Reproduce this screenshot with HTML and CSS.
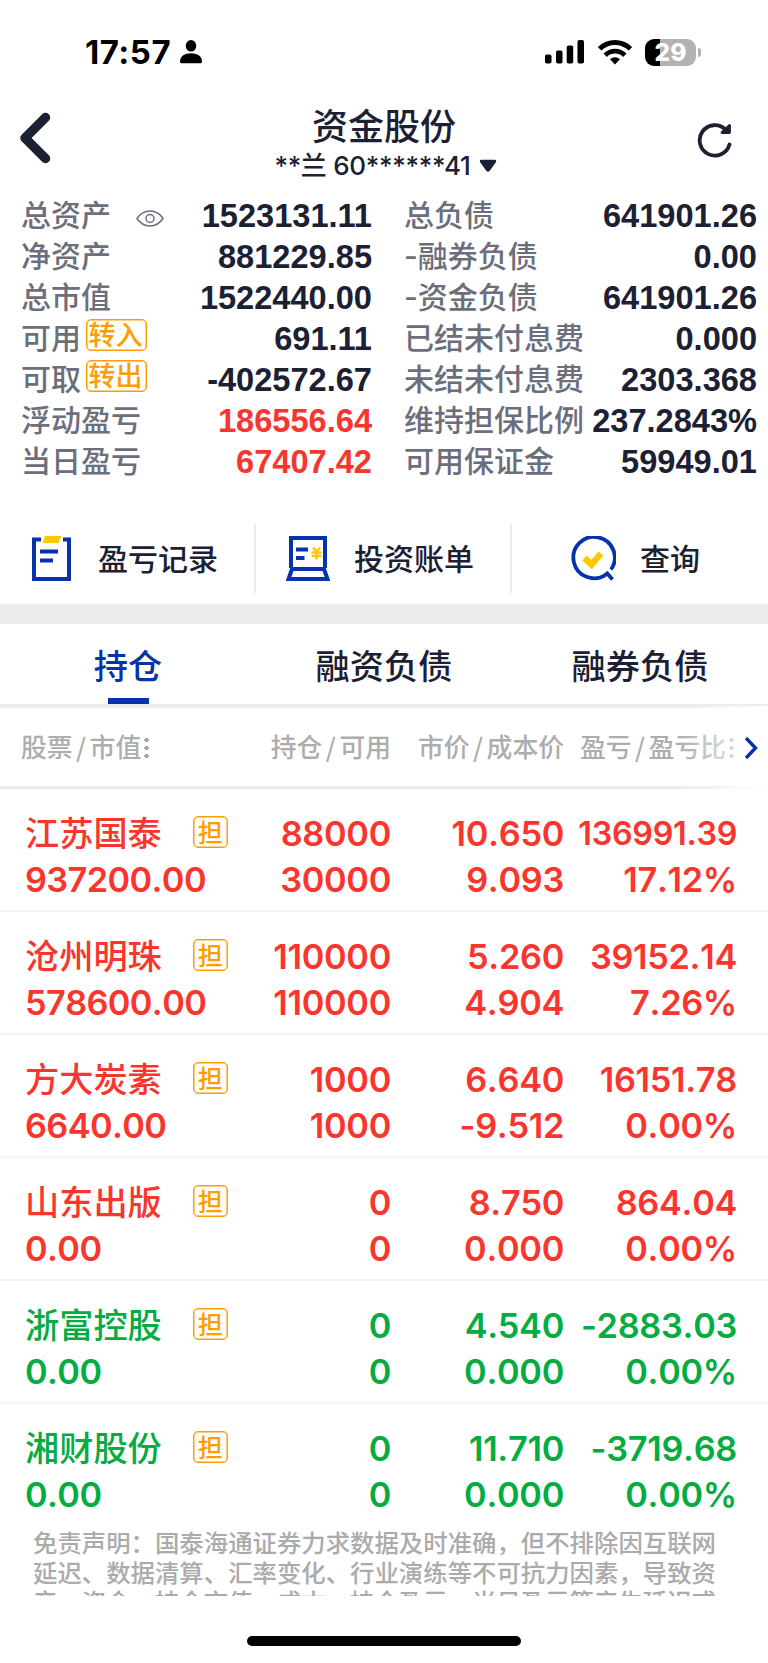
FILE: index.html
```
<!DOCTYPE html>
<html lang="zh-CN">
<head>
<meta charset="utf-8">
<title>资金股份</title>
<link rel="stylesheet" href="styles.css">
</head>
<body>
<div class="status">
  <div class="clock">17:57</div>
  <svg class="person" width="22" height="24" viewBox="0 0 22 24"><ellipse cx="11" cy="5.800" rx="5.300" ry="5.800"/><path d="M0 21.500C0 16 5 13.200 11 13.200s11 2.800 11 8.300c0 1.200-.6 1.800-1.800 1.800H1.800C.6 23.300 0 22.700 0 21.500z"/></svg>
  <svg class="signal" width="40" height="24" viewBox="0 0 40 24"><rect x="0" y="14.500" width="6.500" height="9" rx="1.800"/><rect x="11" y="10.500" width="6.500" height="13" rx="1.800"/><rect x="21.700" y="5.500" width="6.500" height="18" rx="1.800"/><rect x="32.500" y="0" width="6.500" height="23.500" rx="1.800"/></svg>
  <svg class="wifi" width="34" height="25" viewBox="0 0 34 25"><g fill="none" stroke="#000" stroke-width="4.800"><path d="M1.600 8.800a22 22 0 0 1 30.800 0"/><path d="M7.200 15.200a14 14 0 0 1 19.600 0"/></g><path d="M17 24.500l-5-5.200a7.200 7.200 0 0 1 10 0z"/></svg>
  <div class="battery"><span>29</span></div><i class="nub"></i>
</div>
<header class="nav">
  <svg class="back" width="32" height="52" viewBox="0 0 32 52"><path d="M26.500 5.500L6 26l20.500 20.500" fill="none" stroke="#1c2033" stroke-width="9.500" stroke-linecap="round" stroke-linejoin="round"/></svg>
  <div class="heading"><h1>资金股份</h1><div class="account"><span>**兰 60******41</span><svg width="18" height="14" viewBox="0 0 18 14"><path d="M2.500.8h13q2.600 0 1.300 2.400l-6 8.600q-1.800 2-3.600 0l-6-8.600Q-.1.8 2.500.8z" fill="#1c2033"/></svg></div></div>
  <svg class="refresh" width="36" height="36" viewBox="0 0 36 36"><path d="M32.500 22.500A15.200 15.200 0 1 1 28.500 7.500" fill="none" stroke="#1c2033" stroke-width="3.800" stroke-linecap="round"/><path d="M32.500 3.500v7h-7.500z" fill="#1c2033" stroke="#1c2033" stroke-width="2.800" stroke-linejoin="round"/></svg>
</header>
<section class="summary">
  <dl>
    <div><dt>总资产<svg class="eye" width="28" height="17" viewBox="0 0 28 17"><path d="M1 8.500Q6 1 14 1t13 7.500Q22 16 14 16T1 8.500z"/><circle cx="14" cy="8.500" r="4"/></svg></dt><dd>1523131.11</dd></div>
    <div><dt>净资产</dt><dd>881229.85</dd></div>
    <div><dt>总市值</dt><dd>1522440.00</dd></div>
    <div><dt>可用<b class="transfer">转入</b></dt><dd>691.11</dd></div>
    <div><dt>可取<b class="transfer">转出</b></dt><dd>-402572.67</dd></div>
    <div><dt>浮动盈亏</dt><dd class="up">186556.64</dd></div>
    <div><dt>当日盈亏</dt><dd class="up">67407.42</dd></div>
  </dl>
  <dl>
    <div><dt>总负债</dt><dd>641901.26</dd></div>
    <div><dt>-融券负债</dt><dd>0.00</dd></div>
    <div><dt>-资金负债</dt><dd>641901.26</dd></div>
    <div><dt>已结未付息费</dt><dd>0.000</dd></div>
    <div><dt>未结未付息费</dt><dd>2303.368</dd></div>
    <div><dt>维持担保比例</dt><dd>237.2843%</dd></div>
    <div><dt>可用保证金</dt><dd>59949.01</dd></div>
  </dl>
</section>
<nav class="actions">
  <a class="a1"><svg width="40" height="45" viewBox="0 0 40 45"><path d="M9 3.500H2v39.500h35V3.500h-6" fill="none" stroke="#0433ab" stroke-width="4"/><path d="M13 0h16.500l-3 7H10.500z" fill="#ffc800"/><path d="M8 15.500h18M8 24.500h13" stroke="#0433ab" stroke-width="4"/></svg><span>盈亏记录</span></a>
  <a class="a2"><svg width="44" height="45" viewBox="0 0 44 45"><path d="M5 32V2h34v30M2.500 43L6 33h32l3.500 10z" fill="none" stroke="#0433ab" stroke-width="4"/><path d="M10 13.500h12M10 22h8.500" stroke="#0433ab" stroke-width="4"/><path d="M27 11.500l3.500 4 3.500-4M25.500 16.500h10M25.500 20h10M30.500 15.500v8" fill="none" stroke="#ffc800" stroke-width="2.500"/></svg><span>投资账单</span></a>
  <a class="a3"><svg width="46" height="46" viewBox="0 0 46 46"><path d="M41 33.500A20.700 20.700 0 1 0 36 38.500M36 36l6.500 7.500" fill="none" stroke="#0433ab" stroke-width="3.800"/><path d="M14.500 22l7 6.500L31 17.500" fill="none" stroke="#ffc800" stroke-width="6.500"/></svg><span>查询</span></a>
</nav>
<div class="tabs"><div class="tab on">持仓</div><div class="tab">融资负债</div><div class="tab">融券负债</div></div>
<div class="columns">
  <div>股票<i>/</i>市值<em></em></div><div>持仓<i>/</i>可用</div><div>市价<i>/</i>成本价</div><div class="pl">盈亏<i>/</i>盈亏比<em></em></div>
  <div class="more"><svg width="14" height="24" viewBox="0 0 14 24"><path d="M2 2l9.500 10L2 22" fill="none" stroke="#0433ab" stroke-width="3.400"/></svg></div>
</div>
<main class="list">
  <article class="up"><div><h2>江苏国泰<b>担</b></h2><p>937200.00</p></div><div><p>88000</p><p>30000</p></div><div><p>10.650</p><p>9.093</p></div><div><p class="tight">136991.39</p><p>17.12%</p></div></article>
  <article class="up"><div><h2>沧州明珠<b>担</b></h2><p>578600.00</p></div><div><p>110000</p><p>110000</p></div><div><p>5.260</p><p>4.904</p></div><div><p>39152.14</p><p>7.26%</p></div></article>
  <article class="up"><div><h2>方大炭素<b>担</b></h2><p>6640.00</p></div><div><p>1000</p><p>1000</p></div><div><p>6.640</p><p>-9.512</p></div><div><p>16151.78</p><p>0.00%</p></div></article>
  <article class="up"><div><h2>山东出版<b>担</b></h2><p>0.00</p></div><div><p>0</p><p>0</p></div><div><p>8.750</p><p>0.000</p></div><div><p>864.04</p><p>0.00%</p></div></article>
  <article class="down"><div><h2>浙富控股<b>担</b></h2><p>0.00</p></div><div><p>0</p><p>0</p></div><div><p>4.540</p><p>0.000</p></div><div><p>-2883.03</p><p>0.00%</p></div></article>
  <article class="down"><div><h2>湘财股份<b>担</b></h2><p>0.00</p></div><div><p>0</p><p>0</p></div><div><p>11.710</p><p>0.000</p></div><div><p>-3719.68</p><p>0.00%</p></div></article>
</main>
<footer class="notice">免责声明：国泰海通证券力求数据及时准确，但不排除因互联网<br>延迟、数据清算、汇率变化、行业演练等不可抗力因素，导致资<br>产、资金、持仓市值、成本、持仓盈亏、当日盈亏等产生延迟或</footer>
<div class="home"></div>
</body>
</html>
```
FILE: styles.css
```
* { box-sizing: border-box; margin: 0; padding: 0; }
body { width: 768px; height: 1663px; overflow: hidden; background: #fff; color: #1c2033; font-family: Inter, "Noto Sans CJK SC", sans-serif; }
svg { display: block; flex: none; }
i, em { font-style: normal; }
.status { height: 100px; display: flex; align-items: center; padding: 4px 67px 0 85px; color: #000; }
.clock { font-size: 33px; font-weight: 700; width: 87px; letter-spacing: .5px; white-space: nowrap; }
.person { margin-left: 8px; }
.signal { margin-left: auto; }
.wifi { margin-left: 13px; }
.battery { margin-left: 13px; width: 51px; height: 27px; border-radius: 9px; background: linear-gradient(90deg, #000 15px, #b2b2b2 15px); color: #fff; font-size: 24.500px; font-weight: 800; line-height: 27px; text-align: center; }
.nub { width: 3px; height: 9px; margin-left: 2px; border-radius: 0 4px 4px 0; background: #b2b2b2; }
.nav { height: 94px; display: grid; grid-template-columns: 1fr auto 1fr; align-items: start; padding: 0 35px 0 19px; }
.back { margin-top: 12px; }
.refresh { margin-top: 22px; justify-self: end; }
.heading { margin-left: 16px; text-align: center; }
h1 { font-size: 36px; line-height: 52px; height: 52px; margin-top: -2px; font-weight: 500; font-family: "Noto Sans CJK SC", sans-serif; }
.account { display: flex; align-items: center; justify-content: center; gap: 8px; margin: 3px 0 0 3px; font-size: 26px; line-height: 26px; letter-spacing: -.3px; font-weight: 500; white-space: nowrap; }
.summary { height: 328px; display: grid; grid-template-columns: 372px 353px; column-gap: 32px; padding-top: 1px; }
.summary dl:first-child { padding-left: 21px; }
.summary dl div { height: 41px; display: flex; align-items: center; justify-content: space-between; white-space: nowrap; }
dt { display: flex; align-items: center; height: 41px; padding-bottom: 1px; color: #6c6e7b; font: 500 30px/40px Inter, "Noto Sans CJK SC", sans-serif; }
dd { font: 700 32.600px/41px "Liberation Sans", sans-serif; }
.eye { margin: 6px 0 0 25px; fill: none; stroke: #6c6e7b; stroke-width: 1.5; }
.transfer { margin: -6px 0 0 5px; width: 61px; height: 32px; border: 1px solid #ff9c00; box-shadow: inset 0 0 0 .5px #ff9c00; border-radius: 5px; color: #ff9c00; font-size: 27px; font-weight: 500; line-height: 32px; text-indent: -2px; text-align: center; }
.up { color: #fa352d; }
.down { color: #05ac41; }
.actions { height: 81px; display: grid; grid-template-columns: repeat(3, 256px); padding: 2px 0 10px; }
.actions a { display: flex; align-items: center; font: 500 30px/44px "Noto Sans CJK SC", sans-serif; border-right: 2px solid #ebecee; }
.actions a:last-child { border: 0; }
.actions span { margin-top: -4px; }
.a1 { padding-left: 32px; gap: 26px; }
.a2 { padding-left: 30px; gap: 24px; }
.a3 { padding-left: 58px; gap: 24px; }
.tabs { height: 104px; display: grid; grid-template-columns: repeat(3, 1fr); border-top: 20px solid #ebecee; border-bottom: 4px solid #ebecee; margin-top: 1px; }
.tab { display: flex; flex-direction: column; align-items: center; font: 500 34.200px/80px "Noto Sans CJK SC", sans-serif; height: 80px; }
.tab.on { color: #0433ab; }
.tab.on::after { content: ""; width: 41px; height: 6px; margin-top: -6px; background: #0433ab; }
.columns { height: 81px; display: grid; grid-template-columns: 220px 171px 173px 204px; border-bottom: 3px solid #ebecee; color: #adadad; font: 500 25.800px/74px "Noto Sans CJK SC", sans-serif; white-space: nowrap; position: relative; }
.columns > div { display: flex; align-items: center; justify-content: flex-end; height: 76px; }
.columns > div:first-child { justify-content: flex-start; padding-left: 21px; }
.columns > .pl { justify-content: flex-start; padding-left: 16px; }
.columns i { width: 17px; text-align: center; }
.columns em { width: 5px; height: 24px; margin: 3px 0 0 3px; background: radial-gradient(circle at 50% 50%, #a9a9a9 2px, transparent 2.500px) 0 0 / 5px 8px; }
.columns > .more { position: absolute; right: 0; top: -2px; width: 90px; height: 83px; padding: 0 10px 0 0; background: linear-gradient(90deg, rgba(255,255,255,0), rgba(255,255,255,.6) 60%, #fff); }
article { height: 123px; display: grid; grid-template-columns: 220px 171px 173px 173px; padding: 22px 0 0; border-bottom: 2px solid #f3f4f5; font-size: 34.300px; font-weight: 600; line-height: 45.500px; letter-spacing: -.3px; font-kerning: none; text-align: right; white-space: nowrap; }
article:last-child { border: 0; }
article > div:first-child { text-align: left; padding-left: 25px; letter-spacing: -.6px; }
h2 { height: 45.500px; padding-bottom: 4px; display: flex; align-items: center; letter-spacing: 0; font: 500 34.200px/41px "Noto Sans CJK SC", sans-serif; }
h2 b { flex: none; width: 35px; height: 32px; margin: 0 0 0 31px; border: 1px solid #ff9c00; box-shadow: inset 0 0 0 .5px #ff9c00; border-radius: 5px; color: #ff9c00; font-size: 25px; line-height: 29px; font-weight: 500; text-align: center; }
.tight { font-size: 32.300px; }
.notice { height: 69px; overflow: hidden; padding: 0 0 0 33px; color: #ababab; font: 500 24.400px/29.500px "Noto Sans CJK SC", sans-serif; white-space: nowrap; }
.home { width: 274px; height: 10px; margin: 40px auto 0; border-radius: 5px; background: #000; }
```
